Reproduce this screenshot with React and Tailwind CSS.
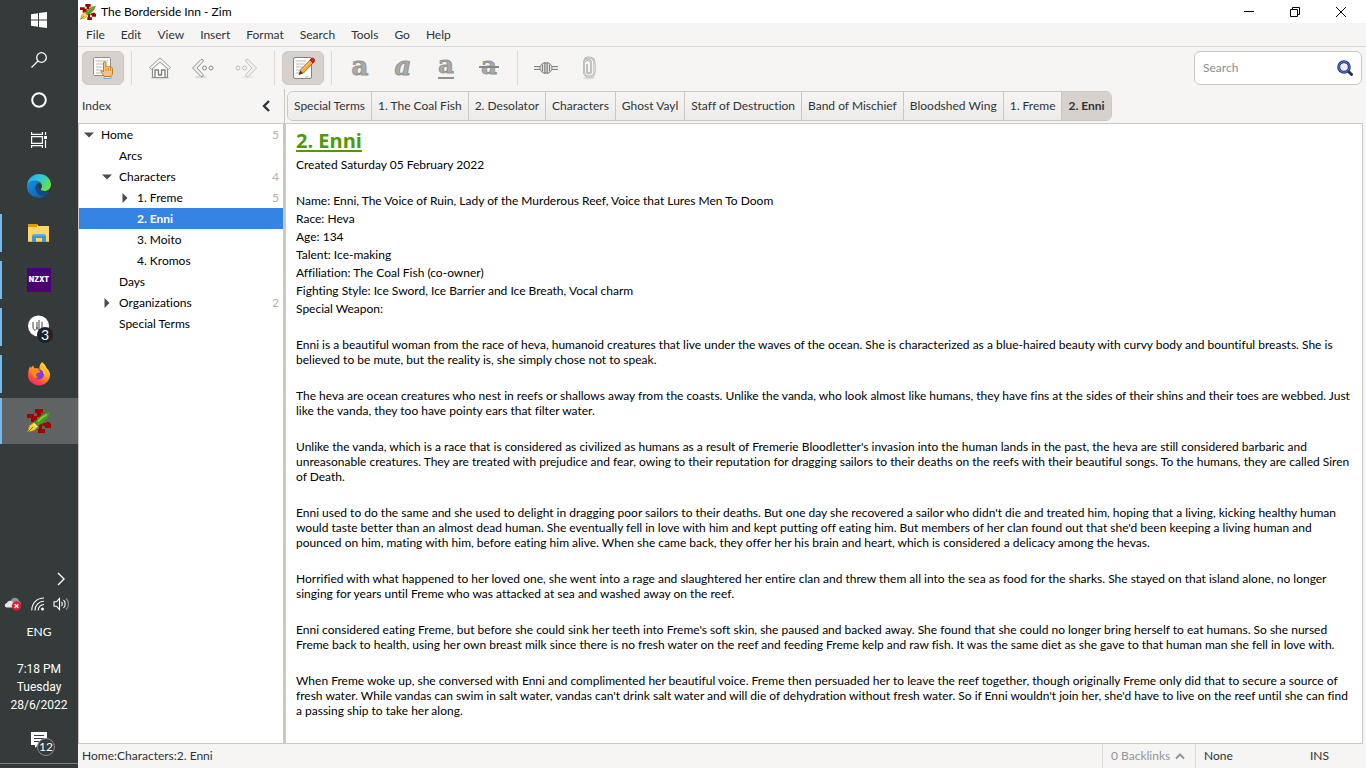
import React from "react";
import clsx from "clsx";

const menus = ["File", "Edit", "View", "Insert", "Format", "Search", "Tools", "Go", "Help"];

const tabs = [
  "Special Terms",
  "1. The Coal Fish",
  "2. Desolator",
  "Characters",
  "Ghost Vayl",
  "Staff of Destruction",
  "Band of Mischief",
  "Bloodshed Wing",
  "1. Freme",
  "2. Enni",
];

const pages = [
  { name: "Home", pad: "pl-1", arrow: "down", count: 5 },
  { name: "Arcs", pad: "pl-[22px]" },
  { name: "Characters", pad: "pl-[22px]", arrow: "down", count: 4 },
  { name: "1. Freme", pad: "pl-10", arrow: "right", count: 5 },
  { name: "2. Enni", pad: "pl-10", active: true },
  { name: "3. Moito", pad: "pl-10" },
  { name: "4. Kromos", pad: "pl-10" },
  { name: "Days", pad: "pl-[22px]" },
  { name: "Organizations", pad: "pl-[22px]", arrow: "right", count: 2 },
  { name: "Special Terms", pad: "pl-[22px]" },
];

const facts = [
  "Name: Enni, The Voice of Ruin, Lady of the Murderous Reef, Voice that Lures Men To Doom",
  "Race: Heva",
  "Age: 134",
  "Talent: Ice-making",
  "Affiliation: The Coal Fish (co-owner)",
  "Fighting Style: Ice Sword, Ice Barrier and Ice Breath, Vocal charm",
  "Special Weapon:",
];

const paragraphs = [
  "Enni is a beautiful woman from the race of heva, humanoid creatures that live under the waves of the ocean. She is characterized as a blue-haired beauty with curvy body and bountiful breasts. She is believed to be mute, but the reality is, she simply chose not to speak.",
  "The heva are ocean creatures who nest in reefs or shallows away from the coasts. Unlike the vanda, who look almost like humans, they have fins at the sides of their shins and their toes are webbed. Just like the vanda, they too have pointy ears that filter water.",
  "Unlike the vanda, which is a race that is considered as civilized as humans as a result of Fremerie Bloodletter's invasion into the human lands in the past, the heva are still considered barbaric and unreasonable creatures. They are treated with prejudice and fear, owing to their reputation for dragging sailors to their deaths on the reefs with their beautiful songs. To the humans, they are called Siren of Death.",
  "Enni used to do the same and she used to delight in dragging poor sailors to their deaths. But one day she recovered a sailor who didn't die and treated him, hoping that a living, kicking healthy human would taste better than an almost dead human. She eventually fell in love with him and kept putting off eating him. But members of her clan found out that she'd been keeping a living human and pounced on him, mating with him, before eating him alive. When she came back, they offer her his brain and heart, which is considered a delicacy among the hevas.",
  "Horrified with what happened to her loved one, she went into a rage and slaughtered her entire clan and threw them all into the sea as food for the sharks. She stayed on that island alone, no longer singing for years until Freme who was attacked at sea and washed away on the reef.",
  "Enni considered eating Freme, but before she could sink her teeth into Freme's soft skin, she paused and backed away. She found that she could no longer bring herself to eat humans. So she nursed Freme back to health, using her own breast milk since there is no fresh water on the reef and feeding Freme kelp and raw fish. It was the same diet as she gave to that human man she fell in love with.",
  "When Freme woke up, she conversed with Enni and complimented her beautiful voice. Freme then persuaded her to leave the reef together, though originally Freme only did that to secure a source of fresh water. While vandas can swim in salt water, vandas can't drink salt water and will die of dehydration without fresh water. So if Enni wouldn't join her, she'd have to live on the reef until she can find a passing ship to take her along.",
];

const ZimIcon = ({ className }) => (
  <svg viewBox="0 0 24 24" className={className}>
    <g fill="#a60000">
      <path d="M8 0h8v4h-2v4h-4V4H8z" />
      <path d="M0 5h7v2h3v3H7v3H4V9H0z" />
      <path d="M16 14h3v-1h4v2h1v4h-6v-2h-2z" />
      <path d="M12 16h3v4h3v4h-7v-4h1z" />
      <path d="M8 8l8 8-2 2-8-8z" />
    </g>
    <path d="M23.500 3C16.500 4 11 8 8 13l3 3.500C16.500 14 21.500 9.500 23.500 3z" fill="#4e9a1c" stroke="#3a7d10" strokeWidth=".4" />
    <path d="M20 5.500C16.500 7 13.500 9.500 11 12.500" fill="none" stroke="#7fd03c" strokeWidth="1.500" />
    <path d="M7 13.500L2.500 16.500.7 23l6.500-1.500 4-4z" fill="#f3d332" stroke="#a8850c" strokeWidth=".8" />
    <path d="M1.500 22.500L6 18" stroke="#7b6009" strokeWidth=".9" />
    <path d="M6.500 14.500l3.500 3.500" stroke="#fff3a0" strokeWidth="1.200" />
  </svg>
);

const WindowsIcon = () => (
  <svg viewBox="0 0 16 16" className="size-4" fill="#fff">
    <path d="M0 2.200L7 1.200V7.500H0zM8 1.100L16 0v7.500H8zM0 8.500h7v6.300l-7-1zM8 8.500h8V16l-8-1.100z" />
  </svg>
);

const SearchIcon = () => (
  <svg viewBox="0 0 16 16" className="size-4" fill="none" stroke="#fff" strokeWidth="1.300">
    <circle cx="10.500" cy="5.500" r="4.800" />
    <path d="M7 9L.5 15.500" />
  </svg>
);

const CortanaIcon = () => (
  <svg viewBox="0 0 16 16" className="size-4" fill="none" stroke="#fff" strokeWidth="2">
    <circle cx="8" cy="8" r="6.800" />
  </svg>
);

const TaskViewIcon = () => (
  <svg viewBox="0 0 16 16" className="size-4" fill="none" stroke="#fff" strokeWidth="1.200">
    <path d="M.6 0v2.400h10.800V0M.6 16v-2.400h10.800V16M.6 4.600h10.800v6.800H.6zM14.500 0v3M14.500 8v8" />
    <path d="M13 4h3v3h-3z" fill="#fff" stroke="none" />
  </svg>
);

const EdgeIcon = () => (
  <svg viewBox="0 0 24 24" className="size-6">
    <defs>
      <linearGradient id="edgeTop" x1="0" y1="0" x2="1" y2=".5">
        <stop offset="0" stopColor="#1f9fe0" />
        <stop offset=".5" stopColor="#2fc6dc" />
        <stop offset="1" stopColor="#63e04f" />
      </linearGradient>
      <linearGradient id="edgeLow" x1="0" y1="0" x2="1" y2="1">
        <stop offset="0" stopColor="#1690e0" />
        <stop offset="1" stopColor="#0c59a4" />
      </linearGradient>
    </defs>
    <path d="M0 11C1 4 6 0 12 0c7 0 12 5 12 10.500 0 4-3 6.500-6.500 6.500-3 0-4-1.200-3.500-2 .8-1 1-1.800 1-2.800C15 9 12 7 8 7c-4 0-7 2-8 4z" fill="url(#edgeTop)" />
    <path d="M0 11c1-2.500 4-4.500 8-4.500 3 0 5 1 6 2.500-3-.5-5.500 1.500-5.500 5 0 5 5 8 9 8.500-8 3.500-17-1-17.500-9.500z" fill="url(#edgeLow)" />
    <path d="M8.500 14c0-2.500 1-4 3-4.700-.8 1.200-.7 3 .3 4.700 2 3.500 6.500 4.500 10.200 3.500-1 2.200-3 4-4.800 5-4.500-.5-8.700-4-8.700-8.500z" fill="#114a8b" />
  </svg>
);

const FolderIcon = () => (
  <svg viewBox="0 0 24 24" className="size-6">
    <path d="M1 3h9l1.500 2H22v16H1z" fill="#ffd566" />
    <path d="M1 3h9v3H1z" fill="#df9a12" />
    <path d="M1 20h21v1H1z" fill="#e8b33d" />
    <path d="M5 21v-6l2-2h10l2 2v6h-4v-4H9v4z" fill="#3c96d9" />
    <path d="M7 13h10l2 2H5z" fill="#55adea" />
  </svg>
);

const NzxtIcon = () => (
  <span className="flex size-6 items-center justify-center bg-[#4b0076] font-['Inter'] text-[7px] font-black text-white">
    NZXT
  </span>
);

const UnrealIcon = () => (
  <span className="relative block size-6">
    <svg viewBox="0 0 24 24" className="size-6">
      <circle cx="11.500" cy="11" r="10.500" fill="#fff" />
      <path d="M6 7v5c0 4 4 4 4 0V7m0 5c0 4 5 4 5 0V7M12 5v10" fill="none" stroke="#444" strokeWidth="1" />
    </svg>
    <span className="absolute -right-0.5 -bottom-1 flex size-4 items-center justify-center rounded-full bg-[#20222b] text-sm leading-4 text-white">
      3
    </span>
  </span>
);

const FirefoxIcon = () => (
  <svg viewBox="0 0 24 24" className="size-6">
    <defs>
      <linearGradient id="fox" x1=".8" y1="0" x2=".2" y2="1">
        <stop offset="0" stopColor="#ffe63a" />
        <stop offset=".45" stopColor="#ff9a1f" />
        <stop offset=".75" stopColor="#ff4a3a" />
        <stop offset="1" stopColor="#e8207a" />
      </linearGradient>
    </defs>
    <path d="M15 0c3 2.500 4 4 4.500 6C22 8 23.500 11 23 14c-1 5.500-5.500 9.500-11 9.500S1 19 1 13.500C1 9 2 6 3 4c.3 1 .6 1.500 1 2 .6-1 1.500-2 2.500-2.500 0 1.500.5 2.500 1.500 3 2-.5 3.500 0 4.500 1C12 5 13 2 15 0z" fill="url(#fox)" />
    <circle cx="12" cy="12.500" r="5" fill="#7c3be0" />
    <path d="M4 8c3-1.500 6-.5 8 .5 1 .5 1.500 1 1.500 1.500-1 1-3 .5-4 2-.8 1.500.5 3 2 3.500-4 1.500-7-2-7.500-7.500z" fill="#ff8a1a" />
    <path d="M14 7c3 1 5 4 4 7.500 0-2-1-3-2-3.500.5-1.500-.5-3-2-4z" fill="#ffc02a" />
  </svg>
);

const systemButtons = [
  { label: "Start", icon: <WindowsIcon /> },
  { label: "Search", icon: <SearchIcon /> },
  { label: "Cortana", icon: <CortanaIcon /> },
  { label: "Task View", icon: <TaskViewIcon /> },
];

const apps = [
  { label: "Edge", icon: <EdgeIcon /> },
  { label: "File Explorer", icon: <FolderIcon />, open: true },
  { label: "NZXT", icon: <NzxtIcon />, open: true },
  { label: "Launcher", icon: <UnrealIcon />, open: true },
  { label: "Firefox", icon: <FirefoxIcon />, open: true },
  { label: "Zim", icon: <ZimIcon className="size-6" />, open: true, active: true },
];

const Taskbar = () => (
  <aside className="flex w-[78px] shrink-0 flex-col bg-[#353a3b] pb-1 text-xs text-white">
    <div className="mb-[3px] flex flex-col">
      {systemButtons.map((b) => (
        <button key={b.label} aria-label={b.label} className="flex h-10 items-center justify-center">
          {b.icon}
        </button>
      ))}
    </div>
    <div className="flex flex-col gap-px">
      {apps.map((a) => (
        <button
          key={a.label}
          aria-label={a.label}
          className={clsx("flex h-[46px] items-center", a.active && "bg-[#5f6363]")}
        >
          <span
            className={clsx("w-0.5", a.open && "bg-[#76b9ed]", a.active ? "h-full" : "h-[38px]")}
          />
          <span className="flex grow justify-center pr-0.5">{a.icon}</span>
        </button>
      ))}
    </div>
    <div className="mt-auto flex flex-col items-center">
      <button aria-label="Show hidden icons" className="mr-3 mb-[7px] flex h-4 items-center self-end">
        <svg viewBox="0 0 10 16" className="h-4 w-2.5" fill="none" stroke="#fff" strokeWidth="1.400">
          <path d="M2 2l6 6-6 6" />
        </svg>
      </button>
      <div className="mb-2 flex h-5 w-full items-center justify-between pr-2 pl-1">
        <svg viewBox="0 0 18 14" className="h-3.5 w-[18px]">
          <path d="M7 3c2-3 7-3 8 1 1.500.5 2 2 2 4H6z" fill="#8f9394" />
          <path d="M3 10.500c-3 0-3-4 0-4.500 1-3 5-3 6.500 0 2 0 3 1.500 3 4.500z" fill="#e6e6e6" />
          <circle cx="12.500" cy="9" r="4.700" fill="#d9202e" />
          <path d="M10.700 7.200l3.600 3.600m0-3.600l-3.600 3.600" stroke="#fff" strokeWidth="1.400" />
        </svg>
        <svg viewBox="0 0 14 14" className="size-3.5" fill="none" stroke="#fff" strokeWidth="1.100">
          <path d="M.8 13.500C.8 6 6 1 13 1M4 13.500C4 8 8 4.300 13 4.300M7.200 13.500c0-3.500 2.800-6 5.800-6" />
          <circle cx="11.500" cy="12" r="1.500" fill="#fff" stroke="none" />
        </svg>
        <svg viewBox="0 0 17 14" className="h-3.5 w-[17px]" fill="none" stroke="#fff" strokeWidth="1.100">
          <path d="M1 4.800h2.500L6.500 1.500v11L3.500 9.200H1zM8.500 5c1 1 1 3 0 4M10.500 3c2.200 2 2.200 6 0 8" />
          <path d="M13 1.500c3.400 3 3.400 8 0 11" stroke="#8f9394" />
        </svg>
      </div>
      <button className="mb-[18px] h-5">ENG</button>
      <div className="mb-1 text-center font-['Roboto','Noto_Sans',sans-serif] leading-[18px]">
        <div>7:18 PM</div>
        <div>Tuesday</div>
        <div>28/6/2022</div>
      </div>
      <button
        aria-label="Notifications"
        className="flex h-[46px] w-full items-center justify-center border-b border-[#7b7f80] pb-0.5"
      >
        <span className="relative block size-4">
          <svg viewBox="0 0 16 16" className="size-4">
            <path d="M0 0h16v13H7l-3 3v-3H0z" fill="#fff" />
            <path d="M3 3.500h10M3 6.500h10M3 9.500h6" stroke="#353a3b" strokeWidth="1.200" />
          </svg>
          <span className="absolute top-1.5 left-1.5 flex size-[18px] items-center justify-center rounded-full border border-[#8a8e8f] bg-[#353a3b] text-xs">
            12
          </span>
        </span>
      </button>
    </div>
  </aside>
);

const ToolButton = ({ label, active, children }) => (
  <button
    aria-label={label}
    className={clsx(
      "flex h-[34px] w-[42px] items-center justify-center rounded-md",
      active && "border border-[#cdc7c2] bg-[#d6d1cd]"
    )}
  >
    {children}
  </button>
);

const Separator = () => <span className="mx-1.5 h-[34px] w-px bg-[#dcd9d6]" />;

const Letter = ({ className }) => (
  <span
    className={clsx(
      "font-['DejaVu_Serif',serif] font-bold text-[#a9aca9] [-webkit-text-stroke:1px_#929592]",
      className
    )}
  >
    a
  </span>
);

const IndexIcon = () => (
  <svg viewBox="0 0 24 24" className="size-6">
    <rect x="2.500" y="1.500" width="17" height="18" rx="1" fill="#fbfbfa" stroke="#8f918e" />
    <path d="M5 5h12M5 8h9M5 11h6M5 14h5M5 17h5" stroke="#b9bbb8" strokeWidth="1.200" />
    <path d="M13 20.500h7v2h-7z" fill="#d5e5f7" stroke="#6f9fd2" strokeWidth=".8" />
    <path d="M12.500 16V7c0-1.700 2.500-1.700 2.500 0v4c.3-1 2-1 2.300.2.500-.9 2-.7 2.200.3.700-.7 2-.2 2 1V17c0 2-1 3-2 3.500h-6c-1-1-3-4-3.500-5-.5-1.300 1-2 2.500.5z" fill="#f6c37f" stroke="#c17d11" strokeWidth="1" />
    <path d="M15 12v3M17.300 12v3M19.500 12v3" stroke="#c17d11" strokeWidth=".7" />
  </svg>
);

const HomeIcon = () => (
  <svg viewBox="0 0 24 24" className="size-6" fill="none" strokeLinejoin="round">
    <ellipse cx="12" cy="22" rx="10" ry="1.500" fill="#dedddb" />
    <path d="M4.500 12v9.500h15V12L12 5.500z" fill="#fafafa" stroke="#8b8e8b" strokeWidth="1.200" />
    <path d="M1.500 11.500L12 2l10.500 9.500-1.800 2L12 6l-8.700 7.500z" fill="#f3f3f2" stroke="#9b9d9b" />
    <path d="M7 21v-7h3.500v5h3v-5H17v7" stroke="#7c7f7c" strokeWidth="1.300" />
  </svg>
);

const BackIcon = ({ className }) => (
  <svg viewBox="0 0 24 24" className={clsx("size-6", className)} fill="#f1f1f0" stroke="#8b8e8b" strokeLinejoin="round">
    <ellipse cx="10" cy="21" rx="6" ry="1.300" fill="#dcdbd9" stroke="none" />
    <path d="M1.500 12L10 3.500q2-1 2.500 1.500L6 12l6.500 7q-.5 2.500-2.500 1.500z" />
    <circle cx="13.500" cy="12" r="2" />
    <circle cx="20" cy="12" r="2" />
  </svg>
);

const EditIcon = () => (
  <svg viewBox="0 0 24 24" className="size-6">
    <rect x="2.500" y="1.500" width="18" height="21" rx="1.500" fill="#fff" stroke="#7f827e" />
    <path d="M5 5h10M5 8h9M5 11h7M5 14h5M5 17h4" stroke="#b6b8b5" strokeWidth="1.200" />
    <path d="M14 20h5l-4 2.500z" fill="#d3d3d1" />
    <path d="M8 18.500l1.500-4.500L19 4l3 3L12.500 17z" fill="#f8a63a" stroke="#a35c0e" strokeWidth=".8" />
    <path d="M10.500 14.500l9-9" stroke="#ffd38a" />
    <path d="M8 18.500l1.300-3.800 2.700 2.500z" fill="#2e3436" />
    <path d="M19 4l1.500-1.700c1.500-1 4 1 3 3L22 7z" fill="#dd2222" stroke="#a40000" strokeWidth=".7" />
  </svg>
);

const LinkIcon = () => (
  <svg viewBox="0 0 24 24" className="size-6" fill="#e4e4e3" stroke="#7f827f">
    <path d="M0 10.500h6M0 13.500h6M18 10.500h6M18 13.500h6" />
    <path d="M0 12h6M18 12h6" stroke="#d8d8d6" />
    <path d="M11 6.500C8 7 6 9.500 6 12s2 5 5 5.500z" />
    <path d="M13 6.500c3 .5 5 3 5 5.500s-2 5-5 5.500z" />
    <path d="M11 7h2v10h-2zM8.500 8.500v7M15.500 8.500v7" />
  </svg>
);

const ClipIcon = () => (
  <svg viewBox="0 0 24 24" className="size-6" fill="none" strokeLinecap="round">
    <ellipse cx="12" cy="22" rx="6" ry="1.300" fill="#e0dfdd" />
    <path d="M10 9v6c0 3 4 3 4 0V7c0-4-7-4-7 0v9c0 6 10.500 6 10.500 0V7c0-6-8-7-10-3" stroke="#a6a8a6" strokeWidth="2" />
    <path d="M10 9v6c0 3 4 3 4 0V7c0-4-7-4-7 0v9c0 6 10.500 6 10.500 0V7c0-6-8-7-10-3" stroke="#f0f0ef" strokeWidth=".7" />
  </svg>
);

const TitleBar = () => (
  <header className="flex h-[23px] items-center bg-white text-black">
    <ZimIcon className="ml-0.5 size-4" />
    <h1 className="ml-[5px]">The Borderside Inn - Zim</h1>
    <div className="ml-auto flex pr-0.5">
      <button aria-label="Minimize" className="flex h-5 w-[46px] items-center justify-center">
        <svg viewBox="0 0 10 10" className="size-2.5" stroke="#000">
          <path d="M0 4.500h10" />
        </svg>
      </button>
      <button aria-label="Restore" className="flex h-5 w-[46px] items-center justify-center">
        <svg viewBox="0 0 10 10" className="size-2.5" fill="none" stroke="#000">
          <path d="M.5 2.500h7v7h-7zM2.500 2.500v-2h7v7h-2" />
        </svg>
      </button>
      <button aria-label="Close" className="flex h-5 w-[46px] items-center justify-center">
        <svg viewBox="0 0 10 10" className="size-2.5" stroke="#000">
          <path d="M0 0l10 10M10 0L0 10" />
        </svg>
      </button>
    </div>
  </header>
);

const Toolbar = () => (
  <div className="flex items-center gap-px p-1">
    <ToolButton label="Show index" active>
      <IndexIcon />
    </ToolButton>
    <Separator />
    <ToolButton label="Home">
      <HomeIcon />
    </ToolButton>
    <ToolButton label="Back">
      <BackIcon />
    </ToolButton>
    <ToolButton label="Forward">
      <BackIcon className="-scale-x-100 opacity-50" />
    </ToolButton>
    <Separator />
    <ToolButton label="Toggle editable" active>
      <EditIcon />
    </ToolButton>
    <Separator />
    <ToolButton label="Strong">
      <Letter className="pb-1 text-[26px] leading-6" />
    </ToolButton>
    <ToolButton label="Emphasis">
      <Letter className="pb-1 text-[26px] leading-6 italic" />
    </ToolButton>
    <ToolButton label="Mark">
      <span className="flex flex-col items-center border-b-2 border-[#8f928f]">
        <Letter className="pb-1 text-2xl leading-4" />
      </span>
    </ToolButton>
    <ToolButton label="Strike">
      <span className="relative px-0.5 pb-1">
        <Letter className="text-2xl leading-6" />
        <span className="absolute inset-x-0 top-3 h-0.5 bg-[#858885]" />
      </span>
    </ToolButton>
    <Separator />
    <ToolButton label="Insert link">
      <LinkIcon />
    </ToolButton>
    <ToolButton label="Attach file">
      <ClipIcon />
    </ToolButton>
    <label className="ml-auto flex h-[34px] w-[168px] items-center rounded-md border border-[#cdc7c2] bg-white px-2">
      <input
        type="text"
        aria-label="Search"
        placeholder="Search"
        className="w-full min-w-0 grow outline-none placeholder:text-[#8b8e8f]"
      />
      <svg viewBox="0 0 16 16" className="size-4 shrink-0">
        <path d="M11 11l3.500 3.500" stroke="#2e3436" strokeWidth="3" strokeLinecap="round" />
        <circle cx="7" cy="7" r="5.300" fill="#eef3fb" stroke="#23398b" strokeWidth="3" />
        <circle cx="7" cy="7" r="5.300" fill="none" stroke="#5c78cc" strokeWidth="1" />
      </svg>
    </label>
  </div>
);

const PageIndex = () => (
  <section className="flex w-[208px] shrink-0 flex-col">
    <div className="mr-px flex h-[34px] items-center justify-between border-r border-[#cdc7c2] pr-[13px] pl-1">
      <h2>Index</h2>
      <button aria-label="Hide index">
        <svg viewBox="0 0 10 12" className="h-3 w-2.5" fill="none" stroke="#2e3436" strokeWidth="2.400">
          <path d="M8 1L3 6l5 5" />
        </svg>
      </button>
    </div>
    <ul className="grow border-t border-r-3 border-l border-[#cdc7c2] bg-white text-black">
      {pages.map((p) => (
        <li key={p.name}>
          <button
            className={clsx(
              "flex h-[21px] w-full items-center pr-1",
              p.pad,
              p.active && "bg-[#3584e4] font-bold text-white"
            )}
          >
            <span className="mr-1.5 flex w-3 justify-center">
              {p.arrow && (
                <svg
                  viewBox="0 0 10 10"
                  className={clsx("size-2.5", p.arrow === "right" && "-rotate-90")}
                  fill="#4a4d4e"
                >
                  <path d="M0 2.500h10L5 7.500z" />
                </svg>
              )}
            </span>
            {p.name}
            <span className="ml-auto text-[#b0b0b0]">{p.count}</span>
          </button>
        </li>
      ))}
    </ul>
  </section>
);

const PathBar = () => (
  <nav className="flex h-[34px] items-center pl-px">
    <div className="flex overflow-hidden rounded-md border border-[#cdc7c2]">
      {tabs.map((t, i) => (
        <button
          key={t}
          className={clsx(
            "h-7 px-1.5",
            i < tabs.length - 1
              ? "border-r border-[#cdc7c2] bg-linear-to-b from-[#f6f5f4] to-[#edebe9]"
              : "bg-[#d6d1cd] font-bold"
          )}
        >
          {t}
        </button>
      ))}
    </div>
  </nav>
);

const PageView = () => (
  <article className="mr-[3px] grow border-t border-r border-[#cdc7c2] bg-white pr-1.5 pl-2.5 text-black">
    <h2 className="pt-0.5 font-['Open_Sans','Noto_Sans',sans-serif] text-xl leading-[30px] font-bold text-[#4e9a06] underline decoration-2 underline-offset-2">
      2. Enni
    </h2>
    <p className="mb-[18px] leading-[18px]">Created Saturday 05 February 2022</p>
    {facts.map((f) => (
      <p key={f} className="leading-[18px]">
        {f}
      </p>
    ))}
    {paragraphs.map((p) => (
      <p key={p} className="mt-[18px] pt-px pb-0.5 leading-[15px]">
        {p}
      </p>
    ))}
  </article>
);

const StatusBar = () => (
  <footer className="mr-[3px] flex h-[25px] items-stretch border-t border-[#cdc7c2]">
    <span className="grow self-center pl-1">Home:Characters:2. Enni</span>
    <button className="flex w-[93px] items-center justify-between border-l border-[#dcd9d6] pr-2.5 pl-2 text-[#929595]">
      0 Backlinks
      <svg viewBox="0 0 10 8" className="h-2 w-2.5" fill="none" stroke="#929595" strokeWidth="2">
        <path d="M1 6.500l4-4 4 4" />
      </svg>
    </button>
    <button className="w-[107px] border-l border-[#dcd9d6] pl-2 text-left">None</button>
    <span className="w-[61px] self-center pl-2">INS</span>
  </footer>
);

export default function App() {
  return (
    <div className="flex h-screen overflow-hidden bg-[#f6f5f4] font-['Lato','Noto_Sans',sans-serif] text-xs text-[#2e3436] [font-variant-ligatures:none]">
      <Taskbar />
      <main className="flex min-w-0 grow flex-col">
        <TitleBar />
        <nav className="flex h-6 items-center border-b border-[#dcdad7]">
          {menus.map((m) => (
            <button key={m} className="px-2">
              {m}
            </button>
          ))}
        </nav>
        <Toolbar />
        <div className="flex min-h-0 grow">
          <PageIndex />
          <section className="flex min-w-0 grow flex-col">
            <PathBar />
            <PageView />
          </section>
        </div>
        <StatusBar />
      </main>
    </div>
  );
}
